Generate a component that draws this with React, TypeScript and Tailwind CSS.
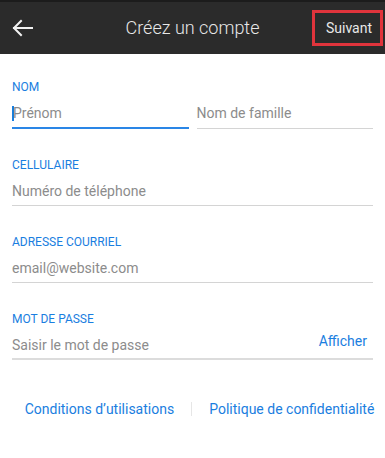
import React from "react";

const font = { fontFamily: "Roboto, 'Noto Sans', sans-serif" };

function Label({ children }: { children: React.ReactNode }) {
  return <div className="text-[12px] leading-[13px] text-[#1a7ee0]">{children}</div>;
}

export default function App() {
  return (
    <div className="w-[385px] h-[458px] bg-white overflow-hidden" style={font}>
      <header className="h-[54px] bg-[#2b2b2b] border-t-2 border-[#1c1c1c] grid grid-cols-[73px_1fr_73px] items-center">
        <div className="pl-3 flex items-center">
          <svg width="22" height="18" viewBox="0 0 22 18" fill="none" stroke="#f2f2f2" strokeWidth="2" strokeLinecap="square">
            <path d="M2 9 H20" />
            <path d="M9 2 L2 9 L9 16" strokeLinejoin="miter" />
          </svg>
        </div>
        <div className="text-center text-[18px] text-[#e8e8e8] leading-none font-light">Créez un compte</div>
        <div className="flex items-center">
          <div className="w-[71px] h-[36px] border-[3px] border-[#e0343c] flex items-center justify-center text-[14px] text-[#e8e8e8] leading-none pl-[3px]">
            Suivant
          </div>
        </div>
      </header>

      <main className="px-3 pt-[27px] flex flex-col gap-[30px]">
        <section>
          <Label>NOM</Label>
          <div className="grid grid-cols-2 gap-2">
            <div className="flex flex-col">
              <div className="pt-[11px] pb-[6px] flex items-center text-[14px] leading-[16px] text-[#8c8c8c]">
                <span className="w-[2px] h-[15px] bg-[#1a7ee0] mr-[-1px]" />
                <span>Prénom</span>
              </div>
              <div className="h-[1.5px] bg-[#2a86e6]" />
            </div>
            <div className="pt-[11px] pb-[6px] border-b border-b-[#d4d4d4] text-[14px] leading-[16px] text-[#8c8c8c]">Nom de famille</div>
          </div>
        </section>

        <section>
          <Label>CELLULAIRE</Label>
          <div className="pt-[11px] pb-[6px] border-b border-b-[#d4d4d4] text-[14px] leading-[16px] text-[#8c8c8c]">Numéro de téléphone</div>
        </section>

        <section>
          <Label>ADRESSE COURRIEL</Label>
          <div className="pt-[11px] pb-[6px] border-b border-b-[#d4d4d4] text-[14px] leading-[16px] text-[#8c8c8c]">email@website.com</div>
        </section>

        <section>
          <Label>MOT DE PASSE</Label>
          <div className="pt-[11px] pb-[5px] border-b-2 border-b-[#dcdcdc] flex items-center justify-between text-[14px] leading-[16px]">
            <span className="text-[#8c8c8c]">Saisir le mot de passe</span>
            <span className="text-[#1a7ee0] mr-[6px] -translate-y-[4px]">Afficher</span>
          </div>
        </section>
      </main>

      <footer className="mt-[41px] flex items-center justify-center gap-[17px] pl-[14px] text-[14px] leading-[16px] text-[#1a7ee0]">
        <span>Conditions d’utilisations</span>
        <span className="w-px h-[14px] bg-[#e6e6e6]" />
        <span>Politique de confidentialité</span>
      </footer>
    </div>
  );
}
